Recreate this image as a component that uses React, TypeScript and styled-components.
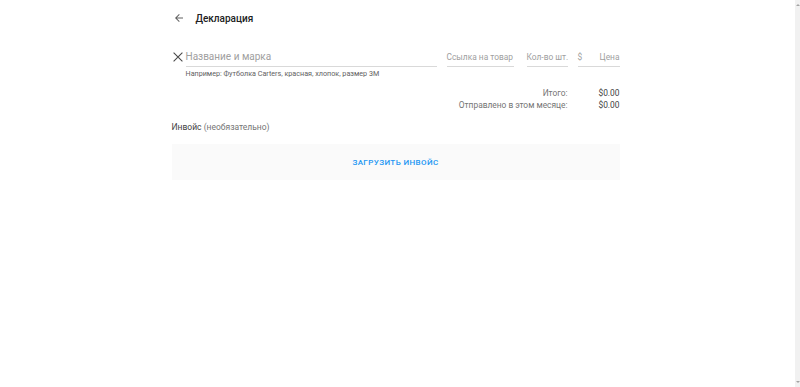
import React from "react";
import styled, { createGlobalStyle } from "styled-components";

const Global = createGlobalStyle`
  body { margin: 0; background: #fff; font-family: Roboto, "Noto Sans", Arial, sans-serif; color: #212121; }
`;

const Shell = styled.div`
  display: flex;
  height: 100vh;
`;

const Main = styled.main`
  flex: 1;
  min-width: 0;
  padding-right: 4px;
`;

const ScrollTrack = styled.div`
  width: 5px;
  background: #f1f1f1;
  display: flex;
  flex-direction: column;
  justify-content: space-between;
  align-items: center;
  padding: 4px 0;
  box-sizing: border-box;
`;

const ScrollArrow = styled.div<{ $down?: boolean }>`
  width: 0;
  height: 0;
  border-left: 2px solid transparent;
  border-right: 2px solid transparent;
  ${(p) => (p.$down ? "border-top: 2px solid #a3a3a3;" : "border-bottom: 2px solid #a3a3a3;")}
`;

const Page = styled.div`
  width: 448px;
  margin: 0 auto;
  padding-top: 9px;
  display: flex;
  flex-direction: column;
`;

const Header = styled.div`
  display: flex;
  align-items: center;
  height: 18px;
  gap: 10px;
  padding-left: 1px;
`;

const BackButton = styled.button`
  border: 0;
  background: none;
  padding: 0;
  width: 13px;
  height: 13px;
  display: flex;
  align-items: center;
  justify-content: center;
  color: #616161;
`;

const Title = styled.h1`
  margin: 0;
  font-size: 10px;
  font-weight: 500;
  color: #212121;
`;

const ItemRow = styled.div`
  display: flex;
  align-items: flex-start;
  margin-top: 20px;
`;

const RemoveIcon = styled.div`
  width: 14px;
  height: 19px;
  box-sizing: border-box;
  display: flex;
  align-items: center;
  padding-left: 1px;
  color: #4a4a4a;
`;

const Field = styled.div<{ $w: number; $ml?: number }>`
  width: ${(p) => p.$w}px;
  margin-left: ${(p) => p.$ml ?? 0}px;
  display: flex;
  flex-direction: column;
`;

const Input = styled.div<{ $align?: string; $small?: boolean }>`
  height: 19px;
  border-bottom: 1px solid #d9d9d9;
  display: flex;
  align-items: center;
  justify-content: ${(p) => p.$align ?? "flex-start"};
  font-size: ${(p) => (p.$small ? "8.4px" : "10px")};
  color: #a0a0a0;
  white-space: nowrap;
`;

const Helper = styled.div`
  margin-top: 2px;
  font-size: 7.2px;
  color: #616161;
  white-space: nowrap;
`;

const Totals = styled.div`
  display: grid;
  grid-template-columns: auto 52px;
  justify-content: end;
  row-gap: 2px;
  margin-top: 10px;
  font-size: 8.4px;
  line-height: 10px;
`;

const TotalLabel = styled.div`
  color: #757575;
  text-align: right;
`;

const TotalValue = styled.div`
  color: #424242;
  text-align: right;
`;

const InvoiceLabel = styled.div`
  margin-top: 12px;
  font-size: 8.5px;
  color: #424242;
  span { color: #757575; }
`;

const Upload = styled.button`
  margin-top: 12px;
  height: 36px;
  border: 0;
  background: #fafafa;
  color: #2196f3;
  font-family: Roboto, "Noto Sans", Arial, sans-serif;
  font-size: 8px;
  font-weight: 500;
  letter-spacing: 0.4px;
  text-transform: uppercase;
`;

export default function App() {
  return (
    <>
      <Global />
      <Shell>
        <Main>
          <Page>
            <Header>
              <BackButton>
                <svg width="12" height="12" viewBox="0 0 24 24"><path fill="currentColor" d="M20 11H7.83l5.59-5.59L12 4l-8 8 8 8 1.41-1.41L7.83 13H20v-2z" /></svg>
              </BackButton>
              <Title>Декларация</Title>
            </Header>
            <ItemRow>
              <RemoveIcon>
                <svg width="10" height="10" viewBox="0 0 10 10">
                  <path d="M0.6 0.6L9.4 9.4M9.4 0.6L0.6 9.4" stroke="currentColor" strokeWidth="1.1" fill="none" />
                </svg>
              </RemoveIcon>
              <Field $w={251}>
                <Input>Название и марка</Input>
                <Helper>Например: Футболка Carters, красная, хлопок, размер 3M</Helper>
              </Field>
              <Field $w={67} $ml={10}>
                <Input $small>Ссылка на товар</Input>
              </Field>
              <Field $w={41} $ml={13}>
                <Input $small>Кол-во шт.</Input>
              </Field>
              <Field $w={42} $ml={10}>
                <Input $small $align="space-between"><span>$</span><span>Цена</span></Input>
              </Field>
            </ItemRow>
            <Totals>
              <TotalLabel>Итого:</TotalLabel>
              <TotalValue>$0.00</TotalValue>
              <TotalLabel>Отправлено в этом месяце:</TotalLabel>
              <TotalValue>$0.00</TotalValue>
            </Totals>
            <InvoiceLabel>Инвойс <span>(необязательно)</span></InvoiceLabel>
            <Upload>Загрузить инвойс</Upload>
          </Page>
        </Main>
        <ScrollTrack>
          <ScrollArrow />
          <ScrollArrow $down />
        </ScrollTrack>
      </Shell>
    </>
  );
}
